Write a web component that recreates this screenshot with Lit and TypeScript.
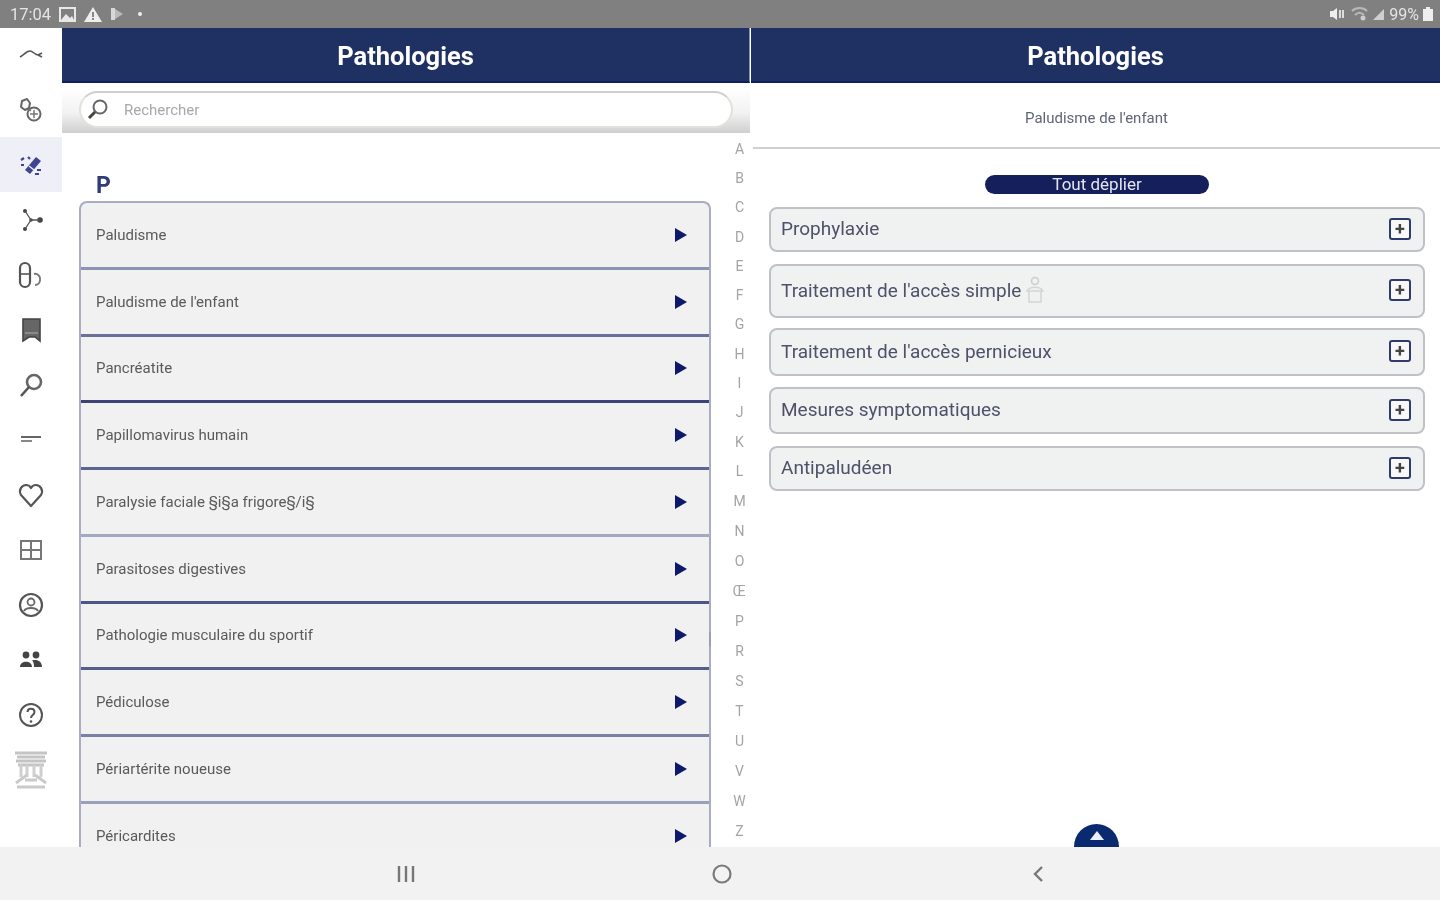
import { LitElement, html, css, svg } from "lit";
import { customElement } from "lit/decorators.js";

const navIcons = [
  svg`<path d="M3 16 C7 14 9 10 13 10 C16 10 18 14 21 14 L25 12 M21 14 L25 16" fill="none" stroke="#555" stroke-width="1.6"/>`,
  svg`<path d="M5 5 L10 3 L13 7 L12 12 L8 14 L4 11 Z" fill="none" stroke="#666" stroke-width="2" stroke-linejoin="round"/><circle cx="17" cy="18" r="6.500" fill="none" stroke="#666" stroke-width="2"/><path d="M11 13 l3 2 M17 14 v8 M13 18 h8" stroke="#777" stroke-width="1.500"/>`,
  svg`<path d="M8 19 L19 6 L24 10 L13 23 Z" fill="#3f4590"/><path d="M4 9 l3-2 M4 14 h3 M20 19 h4 M18 23 h4 M11 6 l2 2" stroke="#3f4590" stroke-width="2.2"/><path d="M12 15 l5 4" stroke="#eff0f7" stroke-width="1.5"/>`,
  svg`<circle cx="8" cy="5" r="2" fill="#444"/><circle cx="14" cy="14" r="1.800" fill="#444"/><circle cx="23" cy="14" r="2.800" fill="#444"/><circle cx="8" cy="23" r="2" fill="#444"/><path d="M8 5 L14 14 L8 23 M14 14 H23" stroke="#555" stroke-width="1.300" fill="none"/>`,
  svg`<rect x="3" y="2" width="10" height="24" rx="5" fill="none" stroke="#555" stroke-width="2.2"/><path d="M3 13 h10" stroke="#555" stroke-width="1.6"/><path d="M17 13 a5 5 0 0 1 6 6 M23 19 a5 5 0 0 1-5 5" fill="none" stroke="#777" stroke-width="2"/>`,
  svg`<path d="M6 3 H23 V25 L18 21 H12 L6 25 Z" fill="#666" stroke="#444" stroke-width="1.6"/><path d="M8 17 H21" stroke="#999" stroke-width="1.5"/>`,
  svg`<circle cx="17" cy="11" r="7" fill="none" stroke="#666" stroke-width="2.6"/><path d="M12 16 L4 25" stroke="#555" stroke-width="2.6"/>`,
  svg`<path d="M4 11 H24" stroke="#666" stroke-width="2"/><path d="M4 15 H15" stroke="#888" stroke-width="2"/>`,
  svg`<path d="M14 25 L4 14 C1 9 5 4 9 4 C11 4 13 5 14 7 C15 5 17 4 19 4 C23 4 27 9 24 14 Z" fill="none" stroke="#555" stroke-width="2.2" stroke-linejoin="round"/>`,
  svg`<rect x="4" y="5" width="20" height="18" fill="none" stroke="#777" stroke-width="2"/><path d="M4 14 H24 M14 5 V23" stroke="#777" stroke-width="2"/>`,
  svg`<circle cx="14" cy="14" r="11" fill="none" stroke="#555" stroke-width="2.2"/><circle cx="14" cy="11" r="3.5" fill="none" stroke="#666" stroke-width="1.8"/><path d="M7 20 C9 16 19 16 21 20" fill="none" stroke="#666" stroke-width="2"/>`,
  svg`<circle cx="9" cy="9" r="3.4" fill="#444"/><circle cx="19" cy="9" r="3.4" fill="#444"/><path d="M3 21 C3 14 15 14 15 21 Z M17 21 C17 17 16 15 15 14.5 C20 13 25 15 25 21 Z" fill="#444"/>`,
  svg`<circle cx="14" cy="14" r="11" fill="none" stroke="#555" stroke-width="2"/><path d="M10.5 11 C10.5 6.5 17.5 6.5 17.5 11 C17.5 14 14 14 14 17" fill="none" stroke="#555" stroke-width="2"/><circle cx="14" cy="20.500" r="1.300" fill="#555"/>`,
];

const rows = [
  "Paludisme",
  "Paludisme de l'enfant",
  "Pancréatite",
  "Papillomavirus humain",
  "Paralysie faciale §i§a frigore§/i§",
  "Parasitoses digestives",
  "Pathologie musculaire du sportif",
  "Pédiculose",
  "Périartérite noueuse",
  "Péricardites",
];
const dividers = ["#8d93b2", "#6a7099", "#3c4477", "#5d6492", "#a3a8c4", "#4e5587", "#565d8d", "#7a80a5", "#9a9fbc", "#555"];
const letters = "A B C D E F G H I J K L M N O Œ P R S T U V W Z".split(" ");
const sections = [
  { t: "Prophylaxie", h: 45, mb: 12 },
  { t: "Traitement de l'accès simple", h: 54, mb: 10, hand: true },
  { t: "Traitement de l'accès pernicieux", h: 48, mb: 11 },
  { t: "Mesures symptomatiques", h: 47, mb: 12 },
  { t: "Antipaludéen", h: 45, mb: 0 },
];

@customElement("app-root")
export class AppRoot extends LitElement {
  static styles = css`
    :host { display: block; width: 1440px; height: 900px; overflow: hidden; background: #fff; font-family: Roboto, "Liberation Sans", sans-serif; }
    .root { width: 1440px; height: 900px; display: flex; flex-direction: column; filter: blur(0.7px); position: relative; }
    .status { height: 28px; flex: none; background: #808080; display: flex; align-items: center; justify-content: space-between; padding: 0 7px 0 10px; color: #e4e4e4; font-size: 16.5px; }
    .st-left, .st-right { display: flex; align-items: center; gap: 8px; }
    .st-right { gap: 4px; font-size: 16px; }
    .app { flex: 1; min-height: 0; display: flex; background: #fff; }
    .side { width: 62px; flex: none; display: flex; flex-direction: column; margin-top: -1px; position: relative; }
    .side-item { height: 55px; flex: none; display: flex; align-items: center; justify-content: center; }
    .side-item.active { background: #eff0f7; }
    .side-item svg { width: 28px; height: 28px; display: block; }
    .panel { display: flex; flex-direction: column; min-width: 0; }
    .panel.left { width: 688px; flex: none; }
    .panel.right { flex: 1; padding-left: 1px; }
    .head { height: 55px; flex: none; background: #1f3163; border-bottom: 2px solid #0d1f5f; box-sizing: border-box; display: flex; align-items: center; justify-content: center; color: #fff; font-size: 25.5px; font-weight: 700; padding-top: 3px; }
    .left .head { border-right: 1px solid #8a93b4; }
    .search { height: 50px; flex: none; box-sizing: border-box; padding: 8px 17px 5px 17px; background: linear-gradient(#fff 10%, #f2f2f2 60%, #cfcfcf 100%); }
    .pill { height: 37px; box-sizing: border-box; border-radius: 19px; background: #fff; border: 2px solid #e2e2dc; border-top-color: #cfcfcf; display: flex; align-items: center; padding-left: 4px; gap: 13px; color: #a8a8ac; font-size: 15px; }
    .pill svg { width: 26px; height: 26px; }
    .lbody { flex: 1; min-height: 0; display: flex; }
    .lcol { width: 649px; flex: none; box-sizing: border-box; padding: 40px 0 0 17px; overflow: hidden; display: flex; flex-direction: column; }
    .letter { height: 28px; flex: none; padding-left: 17px; color: #2f3c79; font-size: 23px; font-weight: 700; line-height: 25px; }
    .list { flex: none; box-sizing: border-box; border: 2px solid #a9adc4; border-bottom: none; border-radius: 8px 8px 0 0; background: #f1f1f1; position: relative; }
    .row { height: 66.75px; box-sizing: border-box; display: flex; align-items: center; justify-content: space-between; padding: 0 22px 0 15px; border-bottom: 3px solid; color: #5a5a5c; font-size: 15px; }
    .arrow { width: 0; height: 0; border-left: 12px solid #0d1a6b; border-top: 7px solid transparent; border-bottom: 7px solid transparent; }
    .thumb { position: absolute; right: -3px; top: 429px; width: 3px; height: 14px; background: #9a9db5; }
    .alpha { flex: 1; display: grid; grid-template-rows: repeat(12, 29.3px) repeat(12, 30px); padding: 1px 0 0 18px; justify-items: center; color: #a4a4a8; font-size: 14px; align-items: center; align-content: start; }
    .sub { height: 66px; flex: none; box-sizing: border-box; margin-left: 2px; border-bottom: 2px solid #d0d0d0; display: flex; align-items: center; justify-content: center; color: #5f6478; font-size: 15px; padding-top: 5px; }
    .rbody { flex: 1; min-height: 0; box-sizing: border-box; padding: 26px 15px 0 18px; display: flex; flex-direction: column; position: relative; }
    .btn { align-self: center; width: 224px; height: 19px; flex: none; margin: 0 0 13px 0; background: #141f5c; border-radius: 10px; color: #e4e6ee; font-size: 17px; line-height: 19px; text-align: center; }
    .acc { flex: none; box-sizing: border-box; background: #f0f1f1; border: 2px solid #bfc1c6; border-radius: 8px; display: flex; align-items: center; justify-content: space-between; padding: 0 12px 2px 10px; color: #4d5269; font-size: 19px; }
    .acc-t { display: flex; align-items: center; gap: 3px; }
    .hand { width: 22px; height: 30px; }
    .plus { width: 22px; height: 22px; box-sizing: border-box; border: 2px solid #2f3a70; border-radius: 3px; background: #f8f8f8; display: flex; align-items: center; justify-content: center; color: #444; font-size: 18px; line-height: 1; font-weight: 700; }
    .fab { position: absolute; left: 323px; bottom: 0; width: 45px; height: 23px; border-radius: 23px 23px 0 0; background: #0a2a70; display: flex; align-items: flex-start; justify-content: center; padding-top: 7px; box-sizing: border-box; }
    .fab i { width: 0; height: 0; border-left: 7px solid transparent; border-right: 7px solid transparent; border-bottom: 9px solid #eef; }
    .nav { height: 53px; flex: none; background: #f2f2f2; display: flex; align-items: center; position: relative; }
    .nav svg { display: block; flex: none; }
    .nb { margin-left: 397px; }
    .nc { margin-left: 297px; }
    .nv { margin-left: 300px; }
  `;

  render() {
    return html`<div class="root">
      <div class="status">
        <div class="st-left">
          <span>17:04</span>
          <svg width="17" height="15" viewBox="0 0 17 15"><rect x="1" y="1" width="15" height="13" fill="none" stroke="#e8e8e8" stroke-width="2"/><path d="M2 13 L7 7 L11 11 L13 9 L15 13 Z" fill="#e8e8e8"/></svg>
          <svg width="18" height="15" viewBox="0 0 18 15"><path d="M9 0 L18 15 H0 Z" fill="#eee"/><rect x="8" y="5" width="2" height="5" fill="#888"/><rect x="8" y="11" width="2" height="2" fill="#888"/></svg>
          <svg width="14" height="14" viewBox="0 0 14 14"><path d="M1 1 H5 V13 H1 Z" fill="#d8d8d8"/><path d="M5 2 L13 7 L5 12 Z" fill="#bbb"/></svg>
          <svg width="10" height="12" viewBox="0 0 10 12" style="margin-left:3px"><circle cx="5" cy="6" r="2" fill="#eee"/></svg>
        </div>
        <div class="st-right">
          <svg width="15" height="14" viewBox="0 0 15 14"><path d="M1 4 H4 L8 1 V13 L4 10 H1 Z" fill="#eee"/><path d="M11 3 V11 M14 3 V11" stroke="#ddd" stroke-width="2"/></svg>
          <svg width="17" height="14" viewBox="0 0 17 14" style="margin-left:3px"><path d="M1 4 C5 0 12 0 16 4 M4 8 C7 5 10 5 13 8" fill="none" stroke="#b8b8b8" stroke-width="2"/><circle cx="12" cy="11" r="2.500" fill="#ccc"/></svg>
          <svg width="13" height="13" viewBox="0 0 13 13"><path d="M12 1 V12 H1 Z" fill="#cfcfcf"/></svg>
          <span>99%</span>
          <svg width="10" height="14" viewBox="0 0 10 14"><path d="M3 0 H7 V2 H10 V14 H0 V2 H3 Z" fill="#eee"/></svg>
        </div>
      </div>

      <div class="app">
        <div class="side">
          ${navIcons.map((ic, i) => html`<div class="side-item ${i === 2 ? "active" : ""}"><svg viewBox="0 0 28 28">${ic}</svg></div>`)}
          <div class="side-item">
            <svg style="width:36px;height:40px" viewBox="0 0 36 40">
              <path d="M2 3 H34 M4 7 H32 M3 11 H33 M5 15 H31" stroke="#c4c4c4" stroke-width="3"/>
              <path d="M8 15 V27 M14 15 V27 M21 15 V27 M28 15 V27" stroke="#cfcfcf" stroke-width="3"/>
              <path d="M3 33 L14 25 M33 33 L22 25 M4 37 H32 M12 30 H24" stroke="#cacaca" stroke-width="3"/>
            </svg>
          </div>
        </div>

        <div class="panel left">
          <div class="head">Pathologies</div>
          <div class="search">
            <div class="pill">
              <svg viewBox="0 0 26 26"><circle cx="15" cy="10" r="6.500" fill="#fff" stroke="#666" stroke-width="2"/><path d="M10 15 L4 21" stroke="#444" stroke-width="3"/></svg>
              <span>Rechercher</span>
            </div>
          </div>
          <div class="lbody">
            <div class="lcol">
              <div class="letter">P</div>
              <div class="list">
                ${rows.map((r, i) => html`<div class="row" style="border-color:${dividers[i]}"><span>${r}</span><span class="arrow"></span></div>`)}
                <div class="thumb"></div>
              </div>
            </div>
            <div class="alpha">${letters.map((l) => html`<div>${l}</div>`)}</div>
          </div>
        </div>

        <div class="panel right">
          <div class="head">Pathologies</div>
          <div class="sub">Paludisme de l'enfant</div>
          <div class="rbody">
            <div class="btn">Tout déplier</div>
            ${sections.map((s) => html`<div class="acc" style="height:${s.h}px;margin-bottom:${s.mb}px">
              <div class="acc-t"><span>${s.t}</span>${s.hand
                ? html`<svg class="hand" viewBox="0 0 22 30"><circle cx="11" cy="6" r="3.500" fill="none" stroke="#ccc" stroke-width="1.500"/><path d="M3 16 C6 11 16 11 19 16 Z M5 16 V27 H17 V16" fill="none" stroke="#d4d4d4" stroke-width="1.500"/></svg>`
                : ""}</div>
              <div class="plus">+</div>
            </div>`)}
            <div class="fab"><i></i></div>
          </div>
        </div>
      </div>

      <div class="nav">
        <svg class="nb" width="18" height="16" viewBox="0 0 18 16"><path d="M2 0 V16 M9 0 V16 M16 0 V16" stroke="#777" stroke-width="2.400"/></svg>
        <svg class="nc" width="20" height="20" viewBox="0 0 20 20"><circle cx="10" cy="10" r="8.500" fill="none" stroke="#7a7a7a" stroke-width="2.200"/></svg>
        <svg class="nv" width="12" height="18" viewBox="0 0 12 18"><path d="M10 2 L3 9 L10 16" fill="none" stroke="#777" stroke-width="2.400"/></svg>
      </div>
    </div>`;
  }
}
